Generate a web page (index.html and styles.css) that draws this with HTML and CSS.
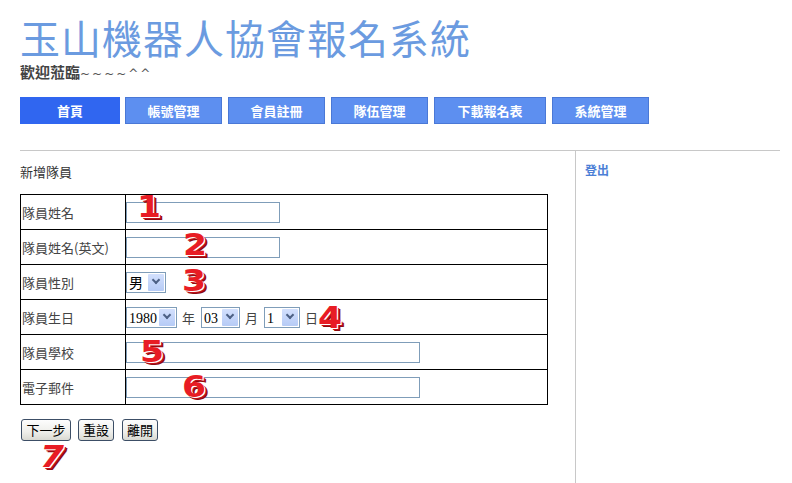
FILE: index.html
```html
<!DOCTYPE html>
<html lang="zh-Hant">
<head>
<meta charset="utf-8">
<title>玉山機器人協會報名系統</title>
<link rel="stylesheet" href="styles.css">
</head>
<body>
<div class="page">
  <header class="header">
    <h1 class="title">玉山機器人協會報名系統</h1>
    <p class="welcome">歡迎蒞臨<span class="tilde">~~~~^^</span></p>
    <nav class="nav">
      <a class="nav-item nav-active nav-home">首頁</a>
      <a class="nav-item">帳號管理</a>
      <a class="nav-item">會員註冊</a>
      <a class="nav-item">隊伍管理</a>
      <a class="nav-item nav-wide">下載報名表</a>
      <a class="nav-item nav-last">系統管理</a>
    </nav>
  </header>
  <div class="main">
    <section class="content">
      <p class="heading">新增隊員</p>
      <table class="form">
        <tr><td class="label">隊員姓名</td><td class="field"><input class="txt txt-short" type="text"></td></tr>
        <tr><td class="label">隊員姓名(英文)</td><td class="field"><input class="txt txt-short" type="text"></td></tr>
        <tr><td class="label">隊員性別</td><td class="field"><span class="sel sel-sex"><select><option>男</option></select></span></td></tr>
        <tr><td class="label">隊員生日</td><td class="field">
          <div class="date">
            <span class="sel sel-year"><select><option>1980</option></select></span><span class="unit">年</span>
            <span class="sel sel-month"><select><option>03</option></select></span><span class="unit">月</span>
            <span class="sel sel-day"><select><option>1</option></select></span><span class="unit">日</span>
          </div>
        </td></tr>
        <tr><td class="label">隊員學校</td><td class="field"><input class="txt txt-long" type="text"></td></tr>
        <tr><td class="label">電子郵件</td><td class="field"><input class="txt txt-long" type="text"></td></tr>
      </table>
      <div class="actions">
        <button class="btn btn-next">下一步</button>
        <button class="btn">重設</button>
        <button class="btn">離開</button>
      </div>
    </section>
    <aside class="side">
      <a class="logout">登出</a>
    </aside>
  </div>
  <span class="badge b1">1</span>
  <span class="badge b2">2</span>
  <span class="badge b3">3</span>
  <span class="badge b4">4</span>
  <span class="badge b5">5</span>
  <span class="badge b6">6</span>
  <span class="badge b7">7</span>
</div>
</body>
</html>
```

FILE: styles.css
```css
* { box-sizing: border-box; }
html, body { margin: 0; padding: 0; background: #fff; }
body {
  font-family: "Noto Sans CJK TC", "Noto Sans", sans-serif;
  font-size: 13px;
  color: #333;
}
.page {
  position: relative;
  width: 792px;
  height: 483px;
  overflow: hidden;
  padding: 0 12px 0 20px;
}
.title {
  margin: 20px 0 0;
  font-family: "Liberation Sans", "Noto Sans CJK TC", sans-serif;
  font-size: 40px;
  line-height: 40px;
  height: 40px;
  font-weight: 400;
  letter-spacing: 1px;
  color: #6b9be0;
}
.welcome {
  margin: 5px 0 0;
  height: 16px;
  font-family: "Liberation Sans", "Noto Sans CJK TC", sans-serif;
  font-size: 15px;
  line-height: 16px;
  font-weight: 700;
  color: #444;
}
.tilde {
  font-weight: 400;
  letter-spacing: 2px;
  color: #555;
  font-family: "DejaVu Sans", sans-serif;
  font-size: 12px;
  line-height: 1;
}
.nav {
  display: flex;
  gap: 6px;
  margin-top: 16px;
  height: 27px;
}
.nav-item {
  display: flex;
  align-items: center;
  justify-content: center;
  width: 97px;
  height: 27px;
  background: #5d8ff0;
  border: 1px solid #4a78d6;
  color: #fff;
  font-weight: 700;
  font-size: 13px;
  text-decoration: none;
}
.nav-home { width: 100px; margin-right: -1px; }
.nav-active { background: #3066f0; border-color: #3066f0; }
.nav-wide { width: 112px; }
.nav-last { width: 97px; }
.main {
  display: flex;
  margin-top: 26px;
  border-top: 1px solid #c8c8c8;
  width: 760px;
  height: 340px;
}
.content { width: 555px; padding-top: 14px; }
.heading { margin: 0; line-height: 13px; height: 13px; font-size: 13px; color: #333; }
.form {
  margin-top: 16px;
  border-collapse: separate;
  border-spacing: 0;
  border-top: 1px solid #000;
  border-left: 1px solid #000;
  width: 528px;
}
.form td {
  border-right: 1px solid #000;
  border-bottom: 1px solid #000;
  height: 35px;
  padding: 0;
  vertical-align: middle;
}
.label { width: 105px; padding-left: 1px !important; color: #444; font-size: 13px; }
.txt {
  display: block;
  height: 21px;
  border: 1px solid #7f9db9;
  padding: 0;
  background: #fff;
}
.txt-short { width: 154px; }
.txt-long { width: 294px; }
.date { display: flex; align-items: center; }
.unit { margin: 0 6px 0 5px; color: #444; font-size: 13px; }
.sel {
  position: relative;
  display: inline-block;
  height: 21px;
  border: 1px solid #7f9db9;
  background: #fff;
  vertical-align: middle;
}
.sel select {
  -webkit-appearance: none;
  appearance: none;
  border: 0;
  background: transparent;
  height: 19px;
  width: 100%;
  padding: 0 0 0 2px;
  font-family: "Liberation Serif", "Noto Sans CJK TC", serif;
  font-size: 14px;
  color: #000;
  outline: none;
}
.sel::after {
  content: "";
  position: absolute;
  top: 1px;
  right: 1px;
  bottom: 1px;
  width: 16px;
  background: linear-gradient(#d3e0fd, #b6cbf6);
  border-radius: 1px;
}
.sel::before {
  content: "";
  position: absolute;
  z-index: 1;
  top: 4px;
  right: 6px;
  width: 4px;
  height: 4px;
  border-right: 2px solid #4d6185;
  border-bottom: 2px solid #4d6185;
  transform: rotate(45deg);
}
.sel-sex { width: 40px; display: block; }
.sel-year { width: 51px; }
.sel-month { width: 39px; }
.sel-day { width: 36px; }
.actions { display: flex; gap: 7px; margin-top: 14px; padding-left: 1px; }
.btn {
  height: 22px;
  width: 36px;
  padding: 0;
  border: 1px solid #3c4e66;
  border-radius: 3px;
  background: linear-gradient(#fdfdfd, #eeeeea 60%, #d9d9d2);
  font-family: "Noto Sans CJK TC", sans-serif;
  font-size: 13px;
  line-height: 18px;
  color: #000;
}
.btn-next { width: 50px; }
.actions .btn:nth-child(3) { margin-left: 1px; }
.side {
  flex: 1;
  border-left: 1px solid #c8c8c8;
  padding: 12px 0 0 9px;
}
.logout {
  display: block;
  font-size: 12px;
  line-height: 14px;
  font-weight: 700;
  color: #4c7fd6;
  text-decoration: none;
}
.badge {
  position: absolute;
  font-family: "DejaVu Sans", sans-serif;
  font-weight: 700;
  font-size: 30px;
  line-height: 1;
  color: #e81c24;
  text-shadow: 1px 1px 0 #fff, 2px 2px 0 #c0101a, 3px 3px 0 #8c0a10;
  transform: scaleX(1.15);
  transform-origin: left top;
}
.b1 { left: 137px; top: 192px; }
.b2 { left: 183px; top: 230px; }
.b3 { left: 182px; top: 266px; }
.b4 { left: 318px; top: 303px; }
.b5 { left: 140px; top: 337px; }
.b6 { left: 182px; top: 372px; }
.b7 { left: 40px; top: 442px; font-style: italic; }
```
